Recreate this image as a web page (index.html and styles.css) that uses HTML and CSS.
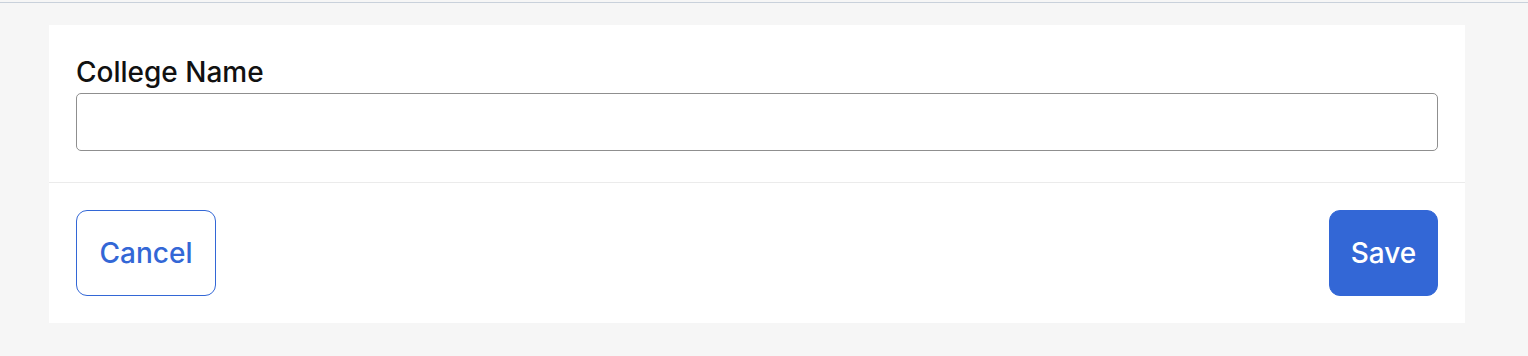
FILE: index.html
```html
<!DOCTYPE html>
<html lang="en">
<head>
<meta charset="utf-8">
<title>College Name</title>
<link rel="stylesheet" href="styles.css">
</head>
<body>
<div class="topbar"></div>
<main class="page">
  <section class="card">
    <div class="card-body">
      <label class="field-label" for="college">College Name</label>
      <input class="field-input" id="college" type="text">
    </div>
    <div class="card-footer">
      <button class="btn btn-outline" type="button">Cancel</button>
      <button class="btn btn-primary" type="button">Save</button>
    </div>
  </section>
</main>
</body>
</html>
```

FILE: styles.css
```css
* { box-sizing: border-box; }
html, body { margin: 0; padding: 0; }
body {
  background: #f6f6f6;
  font-family: Inter, "Liberation Sans", sans-serif;
  color: #111111;
  height: 356px;
  overflow: hidden;
}
.topbar {
  height: 3px;
  border-bottom: 1px solid #c9d1db;
}
.page {
  padding: 22px 63px 0 49px;
}
.card {
  background: #ffffff;
  width: 1416px;
}
.card-body {
  padding: 27px 27px 31px;
  display: flex;
  flex-direction: column;
}
.field-label {
  font-size: 28px;
  line-height: 34px;
  font-weight: 500;
  margin-top: 3px;
  margin-bottom: 4px;
}
.field-input {
  height: 58px;
  border: 1px solid #8f8f8f;
  border-radius: 5px;
  background: #fff;
  font: inherit;
  outline: none;
}
.card-footer {
  border-top: 1px solid #ebebeb;
  padding: 27px;
  display: flex;
  justify-content: space-between;
}
.btn {
  height: 86px;
  padding: 0;
  border-radius: 11px;
  font-family: Inter, "Liberation Sans", sans-serif;
  font-size: 28px;
  font-weight: 500;
  cursor: pointer;
}
.btn-outline {
  background: #ffffff;
  border: 1px solid #3367d6;
  color: #3367d6;
  width: 140px;
}
.btn-primary {
  background: #3367d6;
  border: 1px solid #3367d6;
  color: #ffffff;
  width: 109px;
}
```
